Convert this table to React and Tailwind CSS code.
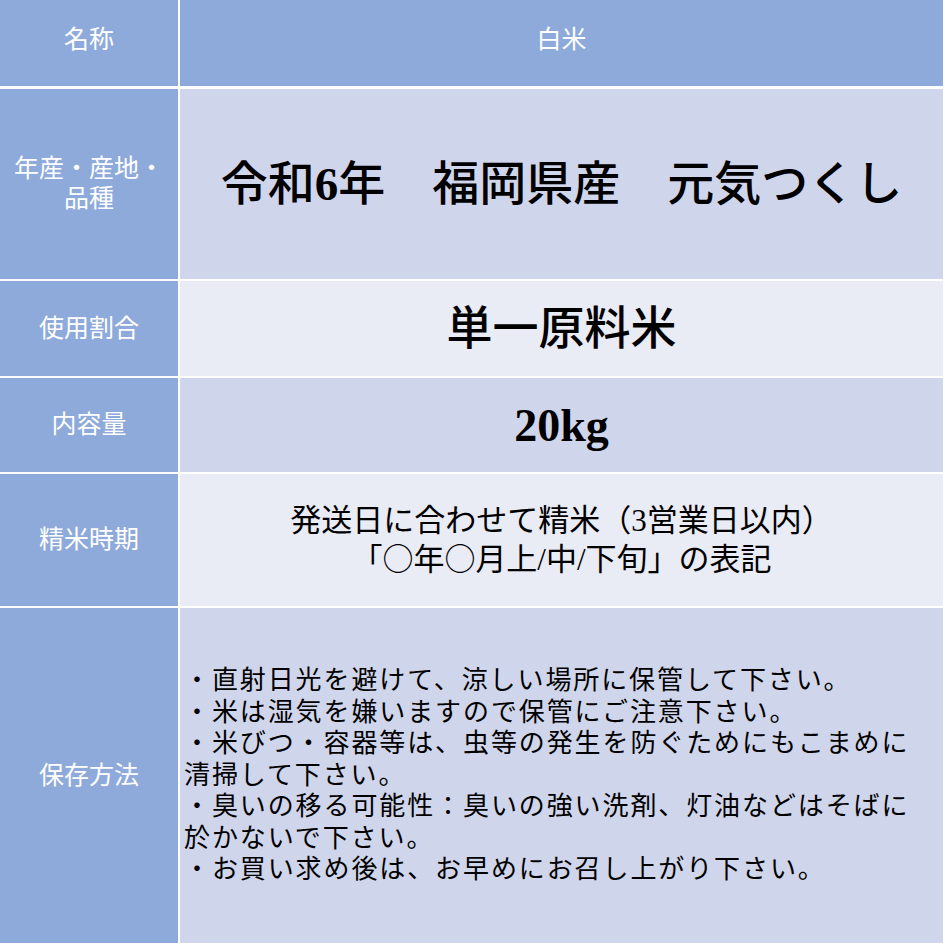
import React from "react";

const jp = { fontFamily: '"Liberation Serif", "Noto Sans CJK JP", serif' };
const cjk = { fontFamily: '"Noto Sans CJK JP", serif' };

function Row({ label, height, tone, children, className = "" }) {
  return (
    <div className="flex gap-[2px]" style={{ height }}>
      <div className="w-[178px] shrink-0 bg-[#8eaadb] flex items-center justify-center text-center text-white text-[25px] leading-[30px]">
        {label}
      </div>
      <div
        className={
          (tone === "dark" ? "bg-[#cfd5ea] " : "bg-[#e9ebf5] ") +
          "flex-1 flex items-center text-black " +
          className
        }
      >
        {children}
      </div>
    </div>
  );
}

export default function App() {
  return (
    <div className="w-[945px] h-[945px] bg-white overflow-hidden" style={jp}>
      <div className="w-[943px] flex flex-col gap-[2px]">
        <div className="flex gap-[2px] h-[86px] mb-[1px]">
          <div className="w-[178px] shrink-0 bg-[#8eaadb] flex items-center justify-center text-white text-[25px] pb-[6px]">
            名称
          </div>
          <div className="flex-1 bg-[#8eaadb] flex items-center justify-center text-white text-[25px] pb-[6px]">
            白米
          </div>
        </div>

        <Row
          height={190}
          tone="dark"
          label={
            <span>
              年産・産地・
              <br />
              品種
            </span>
          }
          className="justify-center"
        >
          <span className="text-[47px] font-medium whitespace-nowrap">
            令和<span className="font-bold">6</span>年　福岡県産　元気つくし
          </span>
        </Row>

        <Row height={95} tone="light" label="使用割合" className="justify-center">
          <span className="text-[46px] font-medium">単一原料米</span>
        </Row>

        <Row height={94} tone="dark" label="内容量" className="justify-center">
          <span className="text-[46px] font-bold">20kg</span>
        </Row>

        <Row height={132} tone="light" label="精米時期" className="justify-center">
          <div className="text-center text-[31px] leading-[36px]">
            発送日に合わせて精米（3営業日以内）
            <br />
            「<span style={cjk}>○</span>年<span style={cjk}>○</span>月上/中/下旬」の表記
          </div>
        </Row>

        <Row height={335} tone="dark" label="保存方法" className="pl-[4px]">
          <div className="text-[26px] leading-[31.5px] tracking-[1.9px] whitespace-nowrap">
            ・直射日光を避けて、涼しい場所に保管して下さい。
            <br />
            ・米は湿気を嫌いますので保管にご注意下さい。
            <br />
            ・米びつ・容器等は、虫等の発生を防ぐためにもこまめに
            <br />
            清掃して下さい。
            <br />
            ・臭いの移る可能性：臭いの強い洗剤、灯油などはそばに
            <br />
            於かないで下さい。
            <br />
            ・お買い求め後は、お早めにお召し上がり下さい。
          </div>
        </Row>
      </div>
    </div>
  );
}
